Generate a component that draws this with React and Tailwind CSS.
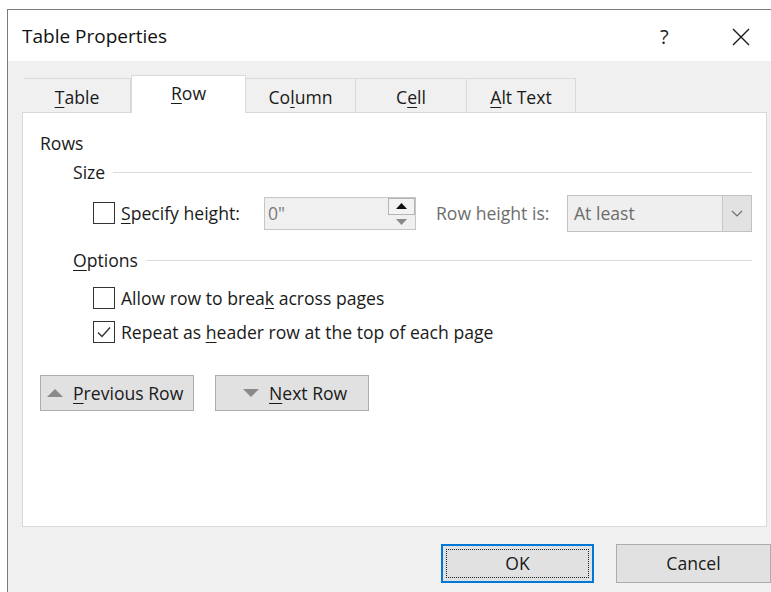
import React from 'react';

const Key = ({ children }) => <span className="underline underline-offset-[3px] decoration-1">{children}</span>;

const CheckBox = ({ checked }) => (
  <span className="flex h-[22px] w-[22px] shrink-0 items-center justify-center border border-[#333333] bg-white">
    {checked && (
      <svg width="16" height="14" viewBox="0 0 16 14">
        <polyline points="2,7.5 6,11.5 14,2.5" fill="none" stroke="#333333" strokeWidth="1.4" />
      </svg>
    )}
  </span>
);

const GroupLabel = ({ children }) => (
  <div className="flex h-[22px] items-center pl-[50px] pr-[14px]">
    <span className="shrink-0">{children}</span>
    <span className="ml-[8px] h-px flex-1 bg-[#dcdcdc]" />
  </div>
);

const Tab = ({ children, active }) =>
  active ? (
    <div className="relative z-10 -mb-px flex h-[38px] w-[115px] items-center justify-center border border-b-0 border-[#d9d9d9] bg-white pb-[2px]">
      {children}
    </div>
  ) : (
    <div className="flex h-[34px] items-center justify-center border-t border-r border-[#dadada] bg-[#f0f0f0] pt-[3px]">
      {children}
    </div>
  );

export default function App() {
  return (
    <div className="h-[592px] w-[771px] overflow-hidden bg-white font-['Open_Sans',sans-serif] text-[17.6px] text-[#1a1a1a]">
      <div className="ml-[7px] mt-[9px] flex h-[600px] w-[780px] flex-col border-l border-t border-[#7a7a7a]">
        {/* title bar */}
        <div className="flex h-[51px] shrink-0 items-center bg-white pl-[14px] pt-[2px]">
          <span className="w-[145px] whitespace-nowrap text-[19px] text-[#111111]">Table Properties</span>
          <span className="ml-[493px] text-[20px] text-[#222222]">?</span>
          <svg className="ml-[62px]" width="20" height="20" viewBox="0 0 20 20">
            <path d="M2 2 L18 18 M18 2 L2 18" stroke="#1a1a1a" strokeWidth="1.4" />
          </svg>
        </div>

        <div className="flex-1 bg-[#f0f0f0] pl-[14px] pt-[13px]">
          {/* tab strip */}
          <div className="flex h-[38px] items-end pl-[2px]">
            <div className="w-[107px]">
              <Tab><Key>T</Key>able</Tab>
            </div>
            <Tab active><Key>R</Key>ow</Tab>
            <div className="w-[110px]">
              <Tab>Co<Key>l</Key>umn</Tab>
            </div>
            <div className="w-[111px]">
              <Tab>C<Key>e</Key>ll</Tab>
            </div>
            <div className="w-[109px]">
              <Tab><Key>A</Key>lt Text</Tab>
            </div>
          </div>

          {/* panel */}
          <div className="flex h-[415px] w-[745px] flex-col border border-[#d9d9d9] bg-white pt-[19px]">
            <div className="flex h-[22px] items-center pl-[17px]">Rows</div>

            <div className="mt-[7px]">
              <GroupLabel>Size</GroupLabel>
            </div>

            <div className="mt-[12px] flex h-[37px] items-center pl-[70px]">
              <div className="flex w-[171px] items-center gap-[6px]">
                <CheckBox />
                <span className="whitespace-nowrap"><Key>S</Key>pecify height:</span>
              </div>
              <div className="flex h-[33px] w-[152px] items-stretch border border-[#c6c6c6] bg-[#f0f0f0]">
                <span className="flex flex-1 items-center pl-[3px] text-[#7a7a7a]">0"</span>
                <div className="flex w-[27px] flex-col">
                  <span className="flex flex-1 items-center justify-center border border-[#b5b5b5] bg-[#f3f3f3]">
                    <svg width="11" height="6" viewBox="0 0 11 6"><polygon points="0,6 5.5,0 11,6" fill="#111111" /></svg>
                  </span>
                  <span className="flex flex-1 items-center justify-center">
                    <svg width="11" height="6" viewBox="0 0 11 6"><polygon points="0,0 5.5,6 11,0" fill="#8a8a8a" /></svg>
                  </span>
                </div>
              </div>
              <span className="ml-[20px] w-[131px] whitespace-nowrap text-[#6d6d6d]">Row height is:</span>
              <div className="flex h-[37px] w-[185px] items-stretch border border-[#c2c2c2] bg-[#efefef]">
                <span className="flex flex-1 items-center pl-[6px] text-[#6d6d6d]">At least</span>
                <span className="flex w-[29px] items-center justify-center border-l border-[#c8c8c8] bg-[#e2e2e2]">
                  <svg width="12" height="7" viewBox="0 0 12 7"><polyline points="1,1 6,6 11,1" fill="none" stroke="#6d6d6d" strokeWidth="1.2" /></svg>
                </span>
              </div>
            </div>

            <div className="mt-[17px]">
              <GroupLabel><Key>O</Key>ptions</GroupLabel>
            </div>

            <div className="mt-[16px] flex h-[22px] items-center gap-[6px] pl-[70px]">
              <CheckBox />
              <span>Allow row to brea<Key>k</Key> across pages</span>
            </div>
            <div className="mt-[12px] flex h-[22px] items-center gap-[6px] pl-[70px]">
              <CheckBox checked />
              <span>Repeat as <Key>h</Key>eader row at the top of each page</span>
            </div>

            <div className="mt-[32px] flex gap-[21px] pl-[17px]">
              <button className="flex h-[36px] w-[154px] items-center border border-[#adadad] bg-[#e1e1e1] pl-[6px] text-[#1a1a1a]">
                <svg width="16" height="8" viewBox="0 0 16 8" className="mr-[10px]"><polygon points="0,8 8,0 16,8" fill="#8a8a8a" /></svg>
                <Key>P</Key>revious Row
              </button>
              <button className="flex h-[36px] w-[154px] items-center border border-[#adadad] bg-[#e1e1e1] pl-[27px] text-[#1a1a1a]">
                <svg width="16" height="8" viewBox="0 0 16 8" className="mr-[10px]"><polygon points="0,0 8,8 16,0" fill="#8a8a8a" /></svg>
                <Key>N</Key>ext Row
              </button>
            </div>
          </div>

          {/* dialog buttons */}
          <div className="mt-[17px] flex gap-[22px] pl-[419px]">
            <button className="flex h-[39px] w-[153px] items-center justify-center border-2 border-[#0078d7] bg-[#e1e1e1] p-[3px]">
              <span className="flex h-full w-full items-center justify-center border border-dotted border-[#222222]">OK</span>
            </button>
            <button className="flex h-[39px] w-[155px] items-center justify-center border border-[#adadad] bg-[#e1e1e1]">
              Cancel
            </button>
          </div>
        </div>
      </div>
    </div>
  );
}
